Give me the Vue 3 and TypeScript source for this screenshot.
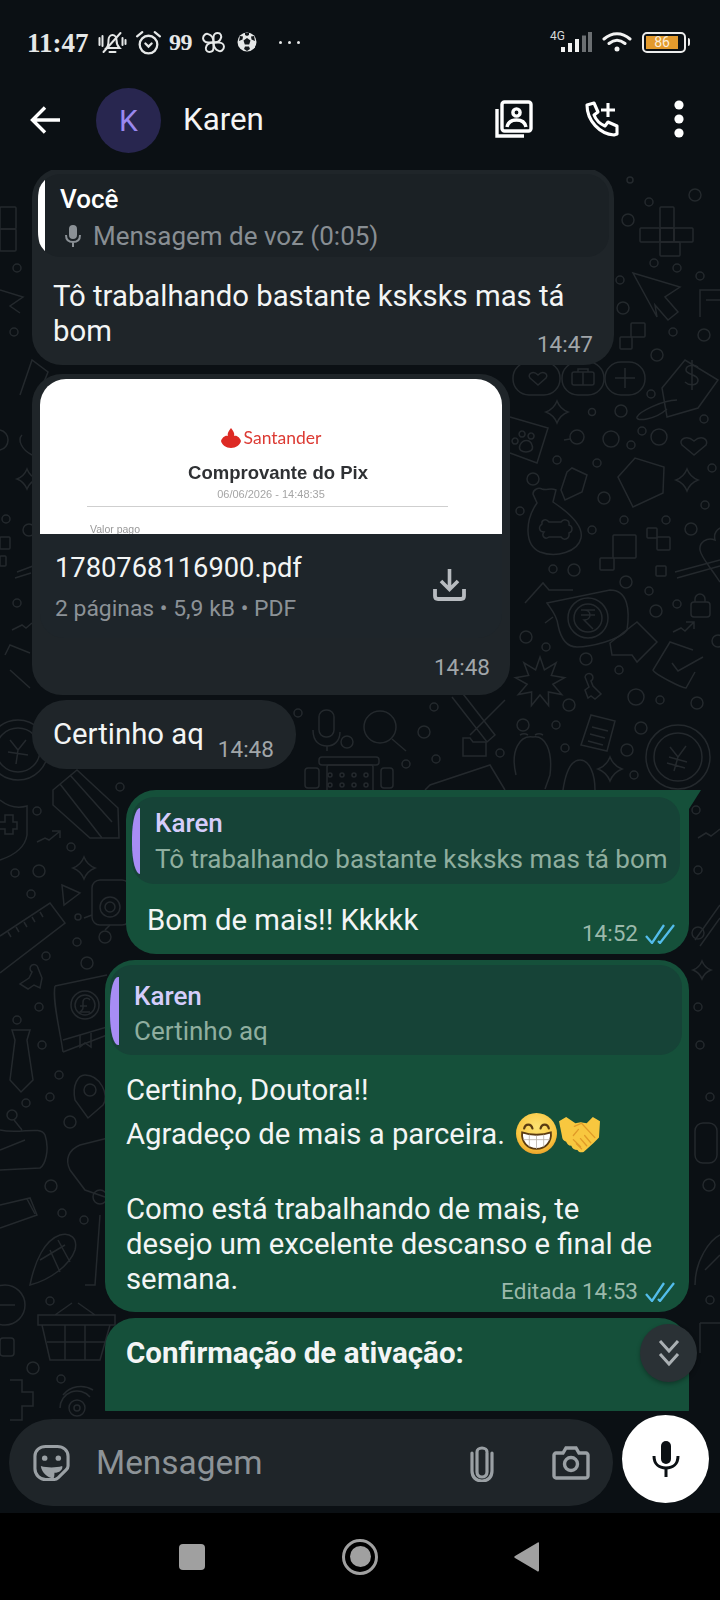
<script setup lang="ts">
// wallpaper doodles, in page coordinates
const star = (x: number, y: number, r: number) => {
  const k = r * 0.28
  return `M${x} ${y - r}Q${x + k} ${y - k} ${x + r} ${y}Q${x + k} ${y + k} ${x} ${y + r}Q${x - k} ${y + k} ${x - r} ${y}Q${x - k} ${y - k} ${x} ${y - r}Z`
}

const burst = (x: number, y: number, big: number, small: number, n: number) => {
  const pts: string[] = []
  for (let i = 0; i < n * 2; i++) {
    const r = i % 2 ? small : big
    const a = (Math.PI * i) / n - Math.PI / 2
    pts.push(`${(x + r * Math.cos(a)).toFixed(1)} ${(y + r * Math.sin(a)).toFixed(1)}`)
  }
  return `M${pts.join('L')}Z`
}

const dots: number[][] = [
  [630, 180, 3], [695, 195, 6], [649, 202, 4], [628, 220, 6], [654, 263, 4], [677, 268, 4], [700, 276, 4],
  [620, 280, 4], [623, 308, 6], [673, 332, 4], [704, 335, 6], [657, 355, 6], [17, 268, 4], [14, 332, 4],
  [592, 412, 3.5], [621, 411, 6], [611, 439, 8], [631, 445, 4], [642, 431, 4], [659, 437, 8], [651, 394, 4],
  [704, 419, 4], [557, 460, 4], [597, 463, 4], [533, 479, 6], [604, 498, 6], [520, 511, 4], [712, 468, 4],
  [705, 505, 4], [624, 520, 4], [666, 520, 4], [691, 529, 6], [592, 530, 4], [553, 569, 4], [574, 570, 6],
  [626, 582, 6], [649, 591, 4], [677, 604, 4], [656, 611, 6], [526, 637, 6], [546, 647, 4], [586, 659, 6],
  [619, 670, 4], [569, 705, 6], [636, 697, 8], [660, 700, 4], [697, 703, 6], [523, 725, 6], [556, 725, 4],
  [641, 728, 6], [565, 748, 4], [627, 750, 6], [634, 775, 4], [718, 641, 6], [6, 519, 4], [29, 530, 6], [17, 603, 4],
  [37, 811, 4], [120, 787, 4], [71, 847, 4], [15, 873, 4], [39, 871, 6], [31, 894, 4], [77, 942, 4], [46, 956, 4],
  [87, 963, 6], [39, 1007, 4], [17, 1020, 4], [42, 1045, 4], [59, 1075, 4], [26, 1103, 4], [50, 1097, 4],
  [70, 1122, 6], [51, 1186, 6], [62, 1213, 4], [84, 1220, 4], [50, 1301, 4], [33, 1368, 6], [61, 1379, 4],
  [298, 713, 4], [347, 742, 6], [424, 732, 6], [434, 707, 4], [406, 764, 4], [436, 759, 4], [500, 753, 4],
  [698, 870, 4], [696, 810, 4], [698, 933, 6], [700, 1045, 4], [710, 1097, 4], [709, 1185, 6], [710, 1300, 4],
  [698, 1007, 4], [90, 1090, 6], [12, 1115, 5], [100, 1197, 7], [5, 1305, 20], [77, 1408, 8], [77, 1408, 3],
  [588, 618, 20], [588, 618, 14], [678, 757, 32], [678, 757, 24], [18, 750, 30], [18, 750, 22], [577, 437, 7],
  [85, 1005, 14], [85, 1005, 10], [110, 907, 10], [110, 907, 5], [78, 917, 3], [105, 937, 6], [380, 727, 16],
  [330, 775, 2], [342, 775, 2], [354, 775, 2], [366, 775, 2], [330, 785, 2], [342, 785, 2], [354, 785, 2], [366, 785, 2]
]

const boxes: number[][] = [
  [513, 362, 47, 33, 16], [562, 362, 42, 33, 16], [605, 362, 40, 33, 16], [572, 372, 22, 13, 2],
  [613, 535, 23, 23, 1], [600, 558, 14, 12, 1], [647, 528, 10, 10, 1], [657, 537, 13, 13, 1], [656, 566, 10, 10, 1],
  [691, 602, 19, 15, 3], [319, 710, 15, 27, 7], [319, 757, 60, 8, 3], [327, 765, 46, 30, 2], [305, 768, 14, 20, 3],
  [381, 768, 12, 20, 3], [92, 880, 38, 45, 8], [0, 1338, 14, 18, 3], [695, 1123, 22, 40, 8],
  [660, 228, 14, 14, 1], [640, 228, 20, 14, 1], [660, 207, 14, 21, 1], [674, 228, 19, 14, 1], [660, 242, 20, 14, 1],
  [631, 323, 14, 14, 1], [620, 337, 12, 12, 1], [0, 207, 16, 22, 1], [0, 229, 16, 22, 1], [0, 537, 10, 12, 1], [0, 556, 6, 10, 1]
]

const lines: string[] = [
  'M538 385l-8-7c-3-4 3-8 8-3 5-5 11-1 8 3z', 'M583 372v13M578 372v-3h10v3', 'M625 368v20M615 378h20',
  'M662 388L685 360L718 380L698 408L667 417Z', 'M698 367c-4-3-12-2-12 3s12 4 12 10-9 6-13 2M692 360v30',
  'M677 400c-15 0-38 12-40 17s18 3 30-8', star(557, 412, 11), 'M510 417L548 428L537 463L510 453',
  'M515 438a3 3 0 1 0 .1 0M522 431a3 3 0 1 0 .1 0M531 433a3 3 0 1 0 .1 0M520 445c3-6 10-6 12 0 2 5-2 7-6 7s-8-2-6-7z',
  'M570 439l-6 1', 'M694 455l-12-10c-4-5 4-11 12-4 8-7 15-1 12 4z', 'M618 477L635 458L664 467L663 493L633 507Z', star(687, 480, 11),
  'M537 503C525 520 524 545 540 552C556 558 578 552 581 538C584 524 565 510 553 502L556 490C550 487 547 491 542 489C538 487 533 490 533 494Z',
  'M542 524c-4 3-3 8 2 8-3 4 1 8 5 5h12c3 4 9 2 8-4 4-1 4-7 0-8 1-5-5-7-8-3h-12c-3-4-8-2-7 2z',
  'M567 472L572 468L587 475L582 492L565 500L561 490Z', 'M720 528c-5 3-6 8-5 12-8-3-16 2-15 10 1 7 8 14 20 32', 'M675 572L720 560M677 578L720 566',
  'M695 602v-3a5 5 0 0 1 10 0v3', 'M525 603L543 583L549 590L573 590M553 617L545 623Z',
  'M547 603L610 590C628 590 630 610 627 630C620 640 590 647 577 647C565 647 560 635 558 625C557 615 550 608 547 603Z',
  'M581 610h14M581 615h14M584 610c8 0 8 10 0 10l9 9', 'M610 643L637 622L657 642L637 662L632 655L612 655Z',
  'M673 632l8-4 4 3 9-9M686 622h8v7', 'M693 650L670 642L653 670C654 674 682 688 686 688L695 672', 'M672 663l6 8 25-14',
  burst(540, 682, 25, 13, 9), 'M585 677a4 4 0 1 1 6 4l2 5 8 8-6 5-4-3-3 2-3-8 4-3z',
  'M591 715L615 721L607 751L581 745Z', 'M592 727l16 4M590 734l15 4M588 741l15 4',
  'M670 747l8 10 8-11M678 757l-4 14M669 757l18 5M667 763l18 5', 'M516 775C510 750 520 735 533 737C545 735 553 750 550 775L545 789M520 735a6 4 0 0 1 8 0M535 735a6 4 0 0 1 8 0',
  'M563 790C566 770 572 760 580 760C590 760 595 775 595 790', star(610, 769, 12),
  'M633 273L680 287L665 297L678 312L668 320L655 305L657 317Z', 'M700 317V290H720M706 300H720', 'M0 290L23 297L10 306L20 313', 'M20 395L32 360L48 372L40 392',
  'M0 430a10 10 0 0 1 8 10 10 10 0 0 1 -8 10', 'M22 435c-5 5 0 15 10 20', star(27, 479, 10), 'M17 572l16-6M15 578l16-5', 'M12 630l10-5 4 3 6-5', 'M5 655L10 645L30 653M10 670L30 688',
  'M313 730c0 12 7 16 14 16 7 0 13-5 13-14M327 746v5', 'M392 739l14 12', 'M460 690L495 735L487 742L452 697M505 700L470 735', 'M463 738h7l3 4h13v14h-23z', 'M425 790L430 785L490 765L505 790',
  'M10 740l8 10 8-10M18 750l-2 14M8 752l20 3', 'M0 800C10 808 20 808 27 806L27 835C25 848 15 855 0 860', 'M0 822h5v-7h8v7h4v7h-4v5h-8v-5H0',
  'M53 790L77 770L118 808L119 838L90 838L53 805Z', 'M60 784L102 838M70 775L112 822', 'M37 842l8-4 4 2 10-8M52 831h8v7',
  'M0 936L50 903L65 923L0 973M8 932l3 5M16 927l3 5M24 922l3 5M32 917l3 5M40 912l3 5', star(84, 868, 11), 'M62 885L80 893L64 905Z', 'M92 915l-8 3M110 925l-5 5',
  'M38 968a4 4 0 1 0-6 4l-3 6-9 6 8 5 6-4 6 3 2-10z', 'M55 986L107 975M55 986C52 1000 60 1030 63 1052M63 1052L107 1035M63 1040L107 1027', 'M80 1035v12l5-4 6 4v-14',
  'M90 1000c-2-3-7-2-7 2v6c0 2-2 3-3 4h10M80 1006h7', 'M12 1030h18l-3 10 6 40-12 12-11-12 5-40z', 'M85 1075C100 1075 110 1095 103 1105L88 1118L75 1100C72 1085 78 1075 85 1075Z',
  'M0 1130C20 1135 40 1125 45 1135C50 1150 45 1165 40 1168L0 1170M0 1150L25 1140M14 1120l8 10', 'M120 1135L80 1145C68 1150 65 1160 70 1170L85 1190L105 1197', 'M100 1215L95 1285H85',
  'M0 1205L30 1198L37 1215L0 1228M27 1199l8 15', 'M30 1285C35 1260 45 1240 60 1235C70 1232 78 1238 75 1250C70 1265 50 1280 30 1285ZM40 1260L65 1245M50 1250L60 1272M58 1240L70 1262',
  'M0 1305h15', 'M38 1315H115V1325H38ZM42 1325L50 1360H100L110 1325M65 1325V1360M85 1325V1360M47 1342H105M55 1315L72 1303M95 1315L78 1303',
  'M10 1380h12v12h11v14h-11v14H10', 'M60 1408a17 17 0 0 1 30-11M63 1395a23 23 0 0 1 30-5',
  'M698 838l8-5 5 3 9-7', 'M695 940L720 905M700 946L720 918', star(702, 970, 9), 'M695 1285C695 1260 710 1240 720 1235M705 1270L720 1255', 'M700 1323h20M700 1323v30'
]
</script>

<template>
  <div class="phone">
    <header class="top">
      <div class="status">
        <span class="clock">11:47</span>
        <svg class="st bell" viewBox="0 0 30 24" fill="none" stroke="#e6e8e8" stroke-width="2" stroke-linecap="round">
          <path d="M9 17c2-2 2-5 2-8 0-3 2-5 4-5s4 2 4 5c0 3 1 6 3 8z" />
          <path d="M12 21h6M6 21L23 2M2 7v7M5 5v10M25 7v7M28 9v4" />
        </svg>
        <svg class="st alarm" viewBox="0 0 26 24" fill="none" stroke="#e6e8e8" stroke-width="2.200" stroke-linecap="round">
          <circle cx="13" cy="14" r="8.500" />
          <path d="M2 6l5-4M24 6l-5-4" />
          <path d="M10 13l3 3 3-3" />
        </svg>
        <span class="nines">99</span>
        <svg class="st fan" viewBox="0 0 22 20" fill="none" stroke="#e6e8e8" stroke-width="1.900" stroke-linejoin="round">
          <path d="M11 10V5c0-3 2-4 4-4 3 0 4 3 3 5-1 3-4 4-7 4z" />
          <path d="M11 10h5c3 0 5 2 5 4 0 3-3 5-5 4-3-1-5-4-5-8z" />
          <path d="M11 10v5c0 3-2 4-4 4-3 0-4-3-3-5 1-3 4-4 7-4z" />
          <path d="M11 10H6C3 10 1 8 1 6c0-3 3-5 5-4 3 1 5 4 5 8z" />
        </svg>
        <svg class="st ball" viewBox="0 0 20 20">
          <circle cx="10" cy="10" r="9.500" fill="#e6e8e8" />
          <path d="M10 6l3.500 2.500-1.300 4H7.800l-1.300-4zM3 4l3 .5-.5 3L2 9zM17 4l-3 .5.5 3L18 9zM7 17l1-2.500h4l1 2.500-3 2zM8 1h4v2l-2 1-2-1z" fill="#14181b" />
        </svg>
        <span class="more">
          <i></i><i></i><i></i>
        </span>
        <span class="status-right">
          <span class="net">
            <em>4G</em>
            <svg class="bars" viewBox="0 0 31 20">
              <rect x="0" y="15" width="4" height="5" fill="#f2f2f2" />
              <rect x="7" y="11" width="4" height="9" fill="#f2f2f2" />
              <rect x="14" y="7" width="4" height="13" fill="#f2f2f2" />
              <rect x="21" y="3.500" width="4" height="16.500" fill="#6b6f72" />
              <rect x="27" y="0" width="4" height="20" fill="#6b6f72" />
            </svg>
          </span>
          <svg class="wifi" viewBox="0 0 30 20" fill="none" stroke="#f2f2f2" stroke-width="3" stroke-linecap="round">
            <path d="M2 7c8-7 18-7 26 0M7 11.500c5-4 11-4 16 0" />
            <circle cx="15" cy="17" r="2.500" fill="#f2f2f2" stroke="none" />
          </svg>
          <span class="battery"><b>86</b></span>
        </span>
      </div>
      <div class="bar">
        <svg class="back" viewBox="0 0 30 28" fill="none" stroke="#fff" stroke-width="3.400">
          <path d="M30 14H3M15 1.500L2.500 14 15 26.500" />
        </svg>
        <div class="avatar">K</div>
        <div class="name">Karen</div>
        <svg class="act act-card" viewBox="0 0 38 38" fill="none" stroke="#fff" stroke-width="3.400">
          <rect x="7" y="2" width="29" height="29" rx="2.500" />
          <path d="M2 9v27h27" />
          <circle cx="21.500" cy="12.500" r="3.600" />
          <path d="M12 27c1-5 5-7 9.500-7s8.500 2 9.500 7" />
        </svg>
        <svg class="act act-call" viewBox="0 0 36 36" fill="none" stroke="#fff" stroke-width="3.100" stroke-linejoin="round">
          <path d="M3 4l7-2 4 9-4 3c2 5 6 9 11 11l3-4 9 4v8l-3 1C16 33 3 20 3 4z" />
          <path d="M24 2v14M17 9h14" />
        </svg>
        <svg class="act act-dots" viewBox="0 0 10 38" fill="#fff">
          <circle cx="5" cy="5" r="4.600" />
          <circle cx="5" cy="19" r="4.600" />
          <circle cx="5" cy="33" r="4.600" />
        </svg>
      </div>
    </header>

    <main class="chat">
      <svg class="wallpaper" viewBox="0 170 720 1343" fill="none" stroke="#24292d" stroke-width="1.500">
        <circle v-for="(d, i) in dots" :key="'c' + i" :cx="d[0]" :cy="d[1]" :r="d[2]" />
        <rect v-for="(b, i) in boxes" :key="'r' + i" :x="b[0]" :y="b[1]" :width="b[2]" :height="b[3]" :rx="b[4]" />
        <path v-for="(l, i) in lines" :key="'p' + i" :d="l" />
      </svg>

      <div class="messages">
        <div class="bubble in b1">
          <div class="quote q-in">
            <span class="qbar white"></span>
            <div class="qtext">
              <div class="qname white-t">Você</div>
              <div class="qline grey-t">
                <svg class="qmic" viewBox="0 0 18 22" fill="none" stroke="#8b9196" stroke-width="2">
                  <rect x="6" y="1" width="6" height="12" rx="3" fill="#8b9196" />
                  <path d="M2 10c0 5 3 7 7 7s7-2 7-7M9 17v5" />
                </svg>
                Mensagem de voz (0:05)
              </div>
            </div>
          </div>
          <p class="text t1">Tô trabalhando bastante ksksks mas tá</p>
          <div class="last-line">
            <span class="text">bom</span>
            <span class="meta m1">14:47</span>
          </div>
        </div>

        <div class="bubble in b2">
          <div class="preview">
            <div class="brand">
              <svg class="flame" viewBox="0 0 20 20" fill="#dd2a24">
                <path d="M10 0c2 3 4 5 3 8 3-1 6 2 7 5-1 4-5 7-10 7S1 17 0 13c1-3 4-6 7-5-1-3 1-5 3-8z" />
              </svg>
              <span>Santander</span>
            </div>
            <div class="doc-title">Comprovante do Pix</div>
            <div class="doc-date">06/06/2026 - 14:48:35</div>
            <div class="doc-rule"></div>
            <div class="doc-label">Valor pago</div>
          </div>
          <div class="file">
            <div>
              <div class="file-name">1780768116900.pdf</div>
              <div class="file-info">2 páginas • 5,9 kB • PDF</div>
            </div>
            <svg class="dl" viewBox="0 0 33 32" fill="none" stroke="#b7bbbf" stroke-width="3.600">
              <path d="M16.500 0v20M8 12l8.500 8.500L25 12" />
              <path d="M2 20v7c0 2 1 3 3 3h23c2 0 3-1 3-3v-7" stroke-width="3.800" />
            </svg>
          </div>
          <div class="meta m2">14:48</div>
        </div>

        <div class="bubble in b3">
          <span class="text">Certinho aq</span>
          <span class="meta m3">14:48</span>
        </div>

        <div class="bubble out b4">
          <div class="quote q-out q4">
            <span class="qbar purple"></span>
            <div class="qtext">
              <div class="qname lilac-t">Karen</div>
              <div class="qline green-t">Tô trabalhando bastante ksksks mas tá bom</div>
            </div>
          </div>
          <p class="text t4">Bom de mais!! Kkkkk</p>
          <div class="meta out-meta m4">
            14:52
            <svg class="ticks" viewBox="0 0 30 20" fill="none" stroke="#53bdeb" stroke-width="2.300">
              <path d="M1 12l6 7L19 1M13 17l2 2L29 1" />
            </svg>
          </div>
        </div>

        <div class="bubble out b5">
          <div class="quote q-out q5">
            <span class="qbar purple wide"></span>
            <div class="qtext">
              <div class="qname lilac-t">Karen</div>
              <div class="qline green-t">Certinho aq</div>
            </div>
          </div>
          <div class="body5">
            <div class="l1">Certinho, Doutora!!</div>
            <div class="l2">
              Agradeço de mais a parceira.
              <svg class="emoji grin" viewBox="0 0 40 40">
                <defs>
                  <radialGradient id="face" cx="50%" cy="35%" r="70%">
                    <stop offset="0%" stop-color="#fde373" />
                    <stop offset="70%" stop-color="#f8c53f" />
                    <stop offset="100%" stop-color="#e89a24" />
                  </radialGradient>
                </defs>
                <circle cx="20" cy="20" r="20" fill="url(#face)" />
                <path d="M8 15c1-5 7-5 8 0M24 15c1-5 7-5 8 0" fill="none" stroke="#5a3b12" stroke-width="2.200" stroke-linecap="round" />
                <path d="M6 19c8 3 20 3 28 0 1 9-5 16-14 16S5 28 6 19z" fill="#fff" stroke="#5a3b12" stroke-width="1.800" />
                <path d="M7 26h26M13 21v12M20 22v13M27 21v12" stroke="#b9b2a8" stroke-width=".8" />
              </svg>
              <svg class="emoji shake" viewBox="0 0 40 40">
                <path d="M0 8l7-4 9 6 5-1 6 1 6-6 7 4-1 16-5 5-10 9c-3 1-5 0-6-2-3 0-5-1-6-4-3 0-4-2-5-4-3-1-4-3-4-5L0 8z" fill="#f8c73f" />
                <path d="M15 13l7-3 13 14M14 22l5-6M17 30l5 5M14 26l7 7M21 25l6 7M25 22l6 7" fill="none" stroke="#e09a28" stroke-width="1.300" stroke-linecap="round" />
              </svg>
            </div>
            <div class="l3"></div>
            <div class="l4">Como está trabalhando de mais, te</div>
            <div class="l4">desejo um excelente descanso e final de</div>
            <div class="l4">semana.</div>
          </div>
          <div class="meta out-meta m5">
            Editada 14:53
            <svg class="ticks" viewBox="0 0 30 20" fill="none" stroke="#53bdeb" stroke-width="2.300">
              <path d="M1 12l6 7L19 1M13 17l2 2L29 1" />
            </svg>
          </div>
        </div>

        <div class="bubble out b6">
          <p class="text strong">Confirmação de ativação:</p>
        </div>
      </div>

      <button class="jump">
        <svg viewBox="0 0 24 30" fill="none" stroke="#aab0b3" stroke-width="3">
          <path d="M3 3l9 10 9-10M3 16l9 10 9-10" />
        </svg>
      </button>

      <div class="composer">
        <div class="input">
          <svg class="ic sticker" viewBox="0 0 38 38" fill="none" stroke="#9aa0a4" stroke-width="3.200">
            <path d="M36 22V12C36 6 31 2 25 2H13C7 2 2 6 2 12v13c0 6 5 11 11 11h9c2 0 3-1 4-2l8-8c1-1 2-3 2-4z" />
            <circle cx="12" cy="14" r="2.800" fill="#9aa0a4" stroke="none" />
            <circle cx="26" cy="14" r="2.800" fill="#9aa0a4" stroke="none" />
            <path d="M8 22c7 2 15 2 22 0 1 4-3 7-8 7 0 2 0 4-1 6-6-1-12-6-13-13z" fill="#9aa0a4" stroke="none" />
          </svg>
          <span class="placeholder">Mensagem</span>
          <svg class="ic clip" viewBox="0 0 24 38" fill="none" stroke="#9aa0a4" stroke-width="3.200" stroke-linecap="round">
            <path d="M17 9v19c0 3-2 5-5 5s-5-2-5-5V8c0-2 2-4 5-4s5 2 5 4M22 9v18c0 6-4 10-10 10S2 33 2 27V9" />
          </svg>
          <svg class="ic cam" viewBox="0 0 38 34" fill="none" stroke="#9aa0a4" stroke-width="3.400">
            <path d="M2 9c0-1 1-2 2-2h7l3-5h10l3 5h7c1 0 2 1 2 2v21c0 1-1 2-2 2H4c-1 0-2-1-2-2z" />
            <circle cx="19" cy="18" r="6.500" />
          </svg>
        </div>
        <button class="mic">
          <svg viewBox="0 0 28 36" fill="#0b1014">
            <rect x="9" y="0" width="10" height="23" rx="5" />
            <path d="M2 15c0 8 5 12 12 12s12-4 12-12" fill="none" stroke="#0b1014" stroke-width="3" />
            <rect x="12.500" y="26" width="3" height="10" />
          </svg>
        </button>
      </div>
    </main>

    <footer class="nav">
      <span class="nav-square"></span>
      <span class="nav-circle"><i></i></span>
      <svg class="nav-back" viewBox="0 0 25 30" fill="#a0a0a0">
        <path d="M25 1c0-1-1-1-2 0L1 14c-1 .5-1 1.500 0 2l22 13c1 1 2 .5 2-1z" />
      </svg>
    </footer>
  </div>
</template>

<style scoped>
.phone {
  width: 720px;
  height: 1600px;
  display: flex;
  flex-direction: column;
  background: #0b1014;
  overflow: hidden;
  font-family: Roboto, "Noto Sans", sans-serif;
  color: #f2f4f4;
}

/* status + title */
.top {
  height: 170px;
  flex-shrink: 0;
  background: #0b1014;
}
.status {
  height: 84px;
  display: flex;
  align-items: center;
  padding-left: 27px;
  color: #e6e8e8;
}
.clock {
  font: 700 27px "Liberation Serif", serif;
  width: 67px;
  margin-top: 2px;
}
.st {
  flex-shrink: 0;
}
.bell {
  width: 31px;
  height: 24px;
  margin-left: 3px;
  margin-top: 2px;
}
.alarm {
  width: 27px;
  height: 25px;
  margin-left: 7px;
}
.nines {
  font: 700 24px "Liberation Serif", serif;
  margin-left: 7px;
  width: 25px;
  letter-spacing: -0.5px;
}
.fan {
  width: 23px;
  height: 21px;
  margin-left: 8px;
}
.ball {
  width: 20px;
  height: 20px;
  margin-left: 12px;
}
.more {
  display: flex;
  gap: 6px;
  margin-left: 22px;
}
.more i {
  width: 3px;
  height: 3px;
  border-radius: 50%;
  background: #e6e8e8;
}
.status-right {
  margin-left: auto;
  display: flex;
  align-items: center;
  padding-right: 34px;
}
.net {
  position: relative;
  display: block;
  width: 41px;
  height: 20px;
  padding-left: 10px;
  box-sizing: border-box;
}
.net em {
  position: absolute;
  left: -1px;
  top: -3px;
  font: 400 12px Roboto, sans-serif;
  color: #d8dadb;
}
.bars {
  display: block;
  width: 31px;
  height: 20px;
}
.wifi {
  width: 30px;
  height: 20px;
  margin-left: 10px;
}
.battery {
  position: relative;
  width: 44px;
  height: 21px;
  margin-left: 10px;
  border: 2.500px solid #ededed;
  border-radius: 5px;
  box-sizing: border-box;
  display: flex;
  padding: 2px;
}
.battery::after {
  content: "";
  position: absolute;
  right: -5.500px;
  top: 4px;
  width: 2px;
  height: 8px;
  background: #ededed;
  border-radius: 0 2px 2px 0;
}
.battery b {
  width: 32px;
  background: #e39a2d;
  color: #fbeeda;
  font: 400 14px/12px Roboto, sans-serif;
  text-align: center;
}

.bar {
  height: 86px;
  margin-top: -6px;
  display: flex;
  align-items: center;
  padding-left: 30px;
}
.back {
  width: 30px;
  height: 28px;
  margin-top: -2px;
}
.avatar {
  width: 65px;
  height: 65px;
  margin-left: 36px;
  margin-top: -2px;
  border-radius: 50%;
  background: #28264f;
  color: #9a88f0;
  font-size: 30px;
  display: flex;
  align-items: center;
  justify-content: center;
}
.name {
  margin-left: 22px;
  margin-top: -4px;
  font-size: 31.300px;
  color: #f4f5f5;
}
.act {
  flex-shrink: 0;
  margin-top: -4px;
}
.act-card {
  width: 38px;
  height: 38px;
  margin-left: auto;
}
.act-call {
  width: 36px;
  height: 36px;
  margin-left: 50.500px;
}
.act-dots {
  width: 10px;
  height: 38px;
  margin-left: 54.500px;
  margin-right: 36px;
}

/* chat */
.chat {
  position: relative;
  flex: 1;
  overflow: hidden;
  display: flex;
  flex-direction: column;
}
.wallpaper {
  position: absolute;
  left: 0;
  top: 0;
  width: 720px;
  height: 1343px;
}
.messages {
  position: relative;
  height: 1241px;
  overflow: hidden;
  flex-shrink: 0;
}
.bubble {
  position: relative;
  box-sizing: border-box;
  border-radius: 30px;
}
.in {
  background: #1f2529;
  margin-left: 32px;
}
.out {
  background: #15503a;
}
.text {
  margin: 0;
  font-size: 29.300px;
  line-height: 35px;
  color: #f3f5f5;
}
.meta {
  font-size: 22.500px;
  line-height: 27px;
  color: #a1a6a9;
}
.out-meta {
  display: flex;
  align-items: center;
  justify-content: flex-end;
  gap: 7px;
  color: #9bb9ab;
}
.ticks {
  width: 30px;
  height: 20px;
  flex-shrink: 0;
}

.quote {
  display: flex;
  align-items: center;
  border-radius: 22px;
  overflow: hidden;
}
.q-in {
  background: #1b2125;
}
.q-out {
  background: #164337;
}
.qbar {
  flex-shrink: 0;
  align-self: stretch;
  width: 7px;
  border-radius: 8px 0 0 8px / 30px 0 0 30px;
}
.qbar.wide {
  width: 9px;
}
.white {
  background: #fff;
}
.purple {
  background: #a78df5;
}
.qname {
  font-size: 26px;
  font-weight: 500;
  line-height: 30px;
}
.qline {
  font-size: 26px;
  line-height: 34px;
  display: flex;
  align-items: center;
  white-space: nowrap;
}
.white-t {
  color: #fff;
}
.lilac-t {
  color: #d5cdfb;
}
.grey-t {
  color: #888e93;
}
.green-t {
  color: #8fae9f;
}
.qmic {
  width: 18px;
  height: 22px;
  margin: 0 11px 0 4px;
}

.b1 {
  width: 582px;
  margin-top: -2px;
  padding: 6px 0 7px;
}
.b1 .q-in {
  margin: 0 5px 0 6px;
  height: 83px;
  border-radius: 22px;
}
.b1 .qtext {
  padding: 5px 0 0 15px;
}
.b1 .qline {
  margin-top: 5px;
}
.t1 {
  padding: 22px 0 0 21px;
}
.last-line {
  display: flex;
  align-items: flex-start;
  justify-content: space-between;
  padding: 0 21px;
}
.m1 {
  margin-top: 17px;
}

.b2 {
  width: 478px;
  margin-top: 9px;
  padding: 5px 8px 14px 8px;
}
.preview {
  height: 155px;
  background: #fff;
  border-radius: 26px 26px 0 0;
  overflow: hidden;
  box-sizing: border-box;
  padding: 48px 0 0;
  color: #333;
  text-align: center;
  filter: blur(0.4px);
}
.brand {
  display: flex;
  align-items: center;
  justify-content: center;
  gap: 3px;
  color: #dc3a33;
  font: 400 17.500px/22px Lato, Roboto, sans-serif;
  height: 22px;
}
.flame {
  width: 20px;
  height: 20px;
}
.doc-title {
  margin-top: 12px;
  font: 700 18.500px/24px "Liberation Sans", sans-serif;
  color: #2f3134;
  margin-left: 14px;
}
.doc-date {
  margin-top: 2px;
  font: 400 11px/14px "Liberation Sans", sans-serif;
  color: #a5a5a5;
}
.doc-rule {
  height: 1px;
  margin: 5px 54px 0 47px;
  background: #cfcfcf;
}
.doc-label {
  margin: 15px 0 0 50px;
  text-align: left;
  font: 400 10.500px/14px "Liberation Sans", sans-serif;
  color: #999;
}
.file {
  height: 104px;
  box-sizing: border-box;
  background: #1e252a;
  border-radius: 0 0 24px 24px;
  display: flex;
  align-items: flex-start;
  justify-content: space-between;
  padding: 19px 36px 0 15px;
}
.file-name {
  font-size: 27.300px;
  line-height: 30px;
  color: #f3f5f5;
}
.file-info {
  margin-top: 13px;
  font-size: 22.900px;
  line-height: 26px;
  color: #8c9297;
}
.dl {
  width: 33px;
  height: 32px;
  margin-top: 16px;
}
.m2 {
  margin-top: 16px;
  text-align: right;
  padding-right: 12px;
}

.b3 {
  width: 264px;
  height: 69px;
  margin-top: 5px;
  border-radius: 34px;
  display: flex;
  padding: 17px 0 0 21px;
  align-items: flex-start;
}
.m3 {
  margin: 19px 0 0 14px;
}

.b4 {
  width: 563px;
  margin: 21px 0 0 126px;
  padding: 7px 0 7px;
  border-top-right-radius: 0;
}
.b4::after {
  content: "";
  position: absolute;
  left: 100%;
  top: 0;
  width: 12px;
  height: 19px;
  background: #15503a;
  clip-path: polygon(0 0, 100% 0, 0 100%);
}
.q4 {
  margin: 0 9px 0 6px;
  height: 87px;
}
.q4 .qbar {
  width: 8px;
  margin: 11px 0 10px;
}
.q4 .qtext {
  padding: 2px 0 0 15px;
}
.q4 .qline {
  margin-top: 4px;
}
.t4 {
  padding: 19px 0 0 21px;
}
.m4 {
  margin-top: -18px;
  padding-right: 14px;
}

.b5 {
  width: 584px;
  margin: 6px 0 0 105px;
  padding: 5px 0 7px;
}
.q5 {
  margin: 0 7px 0 5px;
  height: 90px;
}
.q5 .qbar {
  margin: 12px 0 10px;
}
.q5 .qtext {
  padding: 8px 0 0 15px;
}
.q5 .qline {
  margin-top: 3px;
}
.body5 {
  padding: 18px 0 0 21px;
  font-size: 29.300px;
  color: #f3f5f5;
}
.l1 {
  line-height: 35px;
}
.l2 {
  height: 51px;
  display: flex;
  align-items: center;
  gap: 2px;
}
.l3 {
  height: 33px;
}
.l4 {
  line-height: 35px;
}
.emoji {
  width: 41px;
  height: 41px;
  flex-shrink: 0;
}
.grin {
  margin-left: 9px;
}
.m5 {
  margin-top: -19px;
  padding-right: 14px;
}

.b6 {
  width: 584px;
  height: 120px;
  margin: 6px 0 0 105px;
  padding: 18px 0 0 21px;
}
.strong {
  font-weight: 700;
  font-size: 29.500px;
}

.jump {
  position: absolute;
  left: 640px;
  top: 1154px;
  width: 57px;
  height: 58px;
  padding: 0;
  border: none;
  border-radius: 50%;
  background: #2a3135;
  box-shadow: 0 2px 4px rgba(0, 0, 0, 0.3);
  display: flex;
  align-items: center;
  justify-content: center;
}
.jump svg {
  width: 24px;
  height: 30px;
}

.composer {
  position: relative;
  display: flex;
  align-items: flex-start;
  gap: 9px;
  padding: 4px 0 0 9px;
}
.input {
  width: 604px;
  height: 87px;
  margin-top: 4px;
  border-radius: 44px;
  background: #1f2529;
  box-sizing: border-box;
  padding: 0 23px 0 24px;
  display: flex;
  align-items: center;
}
.ic {
  flex-shrink: 0;
}
.sticker {
  width: 37px;
  height: 38px;
}
.placeholder {
  margin-left: 26px;
  font-size: 33.400px;
  color: #8d9397;
}
.clip {
  width: 24px;
  height: 38px;
  margin-left: auto;
}
.cam {
  width: 38px;
  height: 34px;
  margin-left: 58px;
}
.mic {
  width: 87px;
  height: 88px;
  padding: 0;
  border: none;
  border-radius: 50%;
  background: #fff;
  display: flex;
  align-items: center;
  justify-content: center;
}
.mic svg {
  width: 28px;
  height: 36px;
}

.nav {
  height: 87px;
  flex-shrink: 0;
  background: #000;
  display: flex;
  align-items: center;
  padding-left: 179px;
}
.nav-square {
  width: 26px;
  height: 26px;
  border-radius: 4px;
  background: #a0a0a0;
}
.nav-circle {
  width: 36px;
  height: 36px;
  margin-left: 137px;
  border: 3px solid #a0a0a0;
  border-radius: 50%;
  box-sizing: border-box;
  display: flex;
  align-items: center;
  justify-content: center;
}
.nav-circle i {
  width: 21px;
  height: 21px;
  border-radius: 50%;
  background: #a0a0a0;
}
.nav-back {
  width: 25px;
  height: 30px;
  margin-left: 136px;
}
</style>
